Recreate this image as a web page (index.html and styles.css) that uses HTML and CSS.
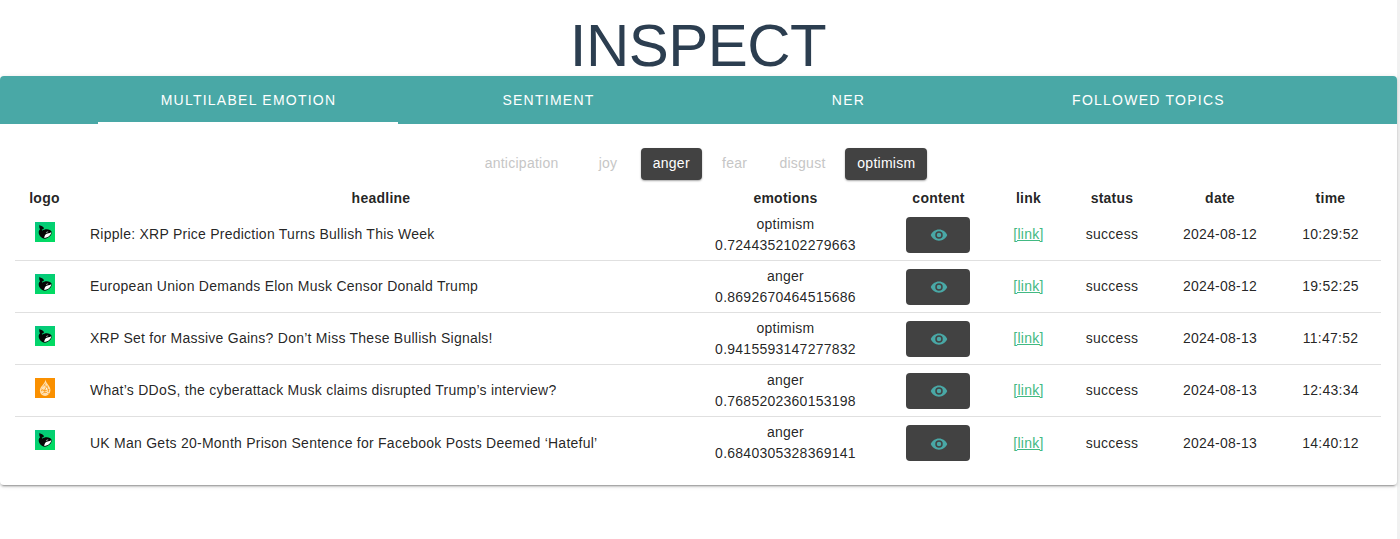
FILE: index.html
```html
<!DOCTYPE html>
<html lang="en">
<head>
<meta charset="utf-8">
<title>Inspect</title>
<link rel="stylesheet" href="styles.css">
</head>
<body>
<svg class="defs" aria-hidden="true">
  <defs>
    <linearGradient id="green" x1="0" y1="0" x2="0.6" y2="1"><stop offset="0" stop-color="#05c680"/><stop offset="1" stop-color="#02db62"/></linearGradient>
    <symbol id="whale" viewBox="0 0 20 20">
      <path fill="url(#green)" d="M0 0h20v20H0z"/>
      <path fill="#050505" d="M4.600 2.800C5.300 4 6.300 3.900 7.500 4.500c1 .5 1.500 1.300 1.300 2.300-.4.600-1.200.7-1.900.7l.2 1.200c2-1.700 5.600-2 7.700-.8 1.100.6 1.800 1.400 1.900 2.500-.1 3-3.300 5.700-6.900 6.300C6.300 16.300 3.700 13.400 3.700 10.200c0-1.300.6-2.100 1.400-2.900C4.200 6 4 4.500 4.600 2.800z"/>
      <path fill="#fff" d="M9.200 15.900c.1-2.300 1.200-4 3.300-4.500 1.500-.3 2.900-.7 3.800-1.200-.2 2.700-2.900 5.200-7.100 5.700z"/>
      <path fill="#9aa39e" d="M10.800 10.300l2.200-1 .4.700-2.200.9z"/>
    </symbol>
    <symbol id="flame" viewBox="0 0 20 20">
      <path fill="#fa9000" d="M0 0h20v20H0z"/>
      <path fill="#ffdfb0" d="M10.500 1.600c.4 1.800 1 3 2.200 4.700 1.500 2.100 3 4 2.700 6.500-.3 2.900-2.400 4.900-5.300 5.200-3-.2-5-2.200-5.200-5-.2-2.500 1-4 2.600-5.800 1.600-1.900 2.700-3.300 3-5.600z"/>
      <path fill="none" stroke="#fa9000" stroke-width=".8" d="M10.300 5.500c-1 3-4.300 4-3.700 7.700M10.400 7.500c2.500 2.500-2 4-1.300 6.500M12 7.600c-.5 2 2 3.500 1.300 6.500M6.400 11.500l3.500 1.300 4.500-1.300M7 15.200l3-1 3.600 1.300"/>
      <path fill="none" stroke="#fff" stroke-width=".8" d="M8.500 8.500l-2 3M11.300 9.800l1.100 3M8.400 13.500l-1 1.500M11.500 15.500l1.600-1"/>
    </symbol>
    <symbol id="eye" viewBox="0 0 24 24">
      <path d="M12,9A3,3 0 0,0 9,12A3,3 0 0,0 12,15A3,3 0 0,0 15,12A3,3 0 0,0 12,9M12,17A5,5 0 0,1 7,12A5,5 0 0,1 12,7A5,5 0 0,1 17,12A5,5 0 0,1 12,17M12,4.5C7,4.500 2.730,7.610 1,12C2.730,16.390 7,19.500 12,19.500C17,19.500 21.270,16.390 23,12C21.270,7.610 17,4.500 12,4.500Z"/>
    </symbol>
  </defs>
</svg>
<main class="page">
  <h1 class="title">INSPECT</h1>
  <section class="card">
    <nav class="tabs">
      <a class="tab active">Multilabel emotion</a>
      <a class="tab">Sentiment</a>
      <a class="tab">NER</a>
      <a class="tab">Followed topics</a>
    </nav>
    <div class="filters">
      <button class="filter wide">anticipation</button>
      <button class="filter">joy</button>
      <button class="filter on">anger</button>
      <button class="filter">fear</button>
      <button class="filter">disgust</button>
      <button class="filter on">optimism</button>
    </div>
    <table class="news">
      <colgroup><col class="c-logo"><col class="c-headline"><col class="c-emotions"><col class="c-content"><col class="c-link"><col class="c-status"><col class="c-date"><col class="c-time"></colgroup>
      <thead>
        <tr><th>logo</th><th>headline</th><th>emotions</th><th>content</th><th>link</th><th>status</th><th class="date">date</th><th>time</th></tr>
      </thead>
      <tbody>
        <tr><td><svg class="logo"><use href="#whale"/></svg></td><td class="headline">Ripple: XRP Price Prediction Turns Bullish This Week</td><td class="emotion">optimism<br>0.7244352102279663</td><td class="content"><button class="view"><svg class="eye"><use href="#eye"/></svg></button></td><td class="line"><a class="link" href="#">[link]</a></td><td class="line">success</td><td class="line date">2024-08-12</td><td class="line">10:29:52</td></tr>
        <tr><td><svg class="logo"><use href="#whale"/></svg></td><td class="headline">European Union Demands Elon Musk Censor Donald Trump</td><td class="emotion">anger<br>0.8692670464515686</td><td class="content"><button class="view"><svg class="eye"><use href="#eye"/></svg></button></td><td class="line"><a class="link" href="#">[link]</a></td><td class="line">success</td><td class="line date">2024-08-12</td><td class="line">19:52:25</td></tr>
        <tr><td><svg class="logo"><use href="#whale"/></svg></td><td class="headline">XRP Set for Massive Gains? Don’t Miss These Bullish Signals!</td><td class="emotion">optimism<br>0.9415593147277832</td><td class="content"><button class="view"><svg class="eye"><use href="#eye"/></svg></button></td><td class="line"><a class="link" href="#">[link]</a></td><td class="line">success</td><td class="line date">2024-08-13</td><td class="line">11:47:52</td></tr>
        <tr><td><svg class="logo"><use href="#flame"/></svg></td><td class="headline">What’s DDoS, the cyberattack Musk claims disrupted Trump’s interview?</td><td class="emotion">anger<br>0.7685202360153198</td><td class="content"><button class="view"><svg class="eye"><use href="#eye"/></svg></button></td><td class="line"><a class="link" href="#">[link]</a></td><td class="line">success</td><td class="line date">2024-08-13</td><td class="line">12:43:34</td></tr>
        <tr><td><svg class="logo"><use href="#whale"/></svg></td><td class="headline">UK Man Gets 20-Month Prison Sentence for Facebook Posts Deemed ‘Hateful’</td><td class="emotion">anger<br>0.6840305328369141</td><td class="content"><button class="view"><svg class="eye"><use href="#eye"/></svg></button></td><td class="line"><a class="link" href="#">[link]</a></td><td class="line">success</td><td class="line date">2024-08-13</td><td class="line">14:40:12</td></tr>
      </tbody>
    </table>
  </section>
</main>
</body>
</html>
```
FILE: styles.css
```css
* { box-sizing: border-box; }
html { background: #f1f1f1; overflow: hidden; }
body { margin: 0; font-family: "Liberation Sans", Arial, sans-serif; }
button { font: inherit; letter-spacing: inherit; border: 0; margin: 0; }
.defs { position: absolute; width: 0; height: 0; }
.page { width: 1397px; height: 539px; padding-top: 16px; background: #fff; }
.title {
  margin: 0;
  padding-right: 1px;
  color: #2c3e50;
  font-size: 60px;
  line-height: 60px;
  font-weight: 400;
  letter-spacing: -0.5px;
  text-align: center;
}
.card {
  height: 409px;
  overflow: hidden;
  border-radius: 4px;
  background: #fff;
  box-shadow: 0 3px 1px -2px rgba(0,0,0,.2), 0 2px 2px 0 rgba(0,0,0,.14), 0 1px 5px 0 rgba(0,0,0,.12);
  color: rgba(0,0,0,.87);
  font-size: 14px;
  letter-spacing: .25px;
}
.tabs { display: flex; justify-content: center; height: 48px; padding-right: 1px; background: #49a8a6; }
.tab {
  display: flex;
  align-items: center;
  justify-content: center;
  width: 300px;
  padding-left: 1px;
  border-bottom: 2px solid transparent;
  border-top: 2px solid transparent;
  color: #fff;
  letter-spacing: 1.25px;
  text-transform: uppercase;
}
.tab.active { border-bottom-color: #fff; }
.filters { display: flex; justify-content: center; gap: 7.8px; padding: 24px 0 7px; margin-left: 3px; }
.filter {
  height: 32px;
  min-width: 50px;
  padding: 0 12px 2px;
  border-radius: 4px;
  background: transparent;
  color: #c6c6c6;
}
.filter.wide { margin-right: 4.7px; }
.filter.on {
  background: #424242;
  color: #fff;
  box-shadow: 0 1px 2px rgba(0,0,0,.35);
}
.news { width: 1366px; margin: 0 15px; table-layout: fixed; border-collapse: separate; border-spacing: 0; text-align: center; }
.news th { height: 22px; padding: 0; line-height: 20px; }
.news td { height: 52px; padding: 0; vertical-align: middle; border-bottom: 1px solid #e0e0e0; }
.news .headline, .news .line { padding-bottom: 2px; }
.news .headline { padding-left: 16px; text-align: left; }
.news .content, .news .date { padding-right: 1px; }
.news tr:last-child td { padding-bottom: 0; border-bottom: 0; }
.news tr:last-child td:first-child { padding-bottom: 2px; }
.emotion { line-height: 21px; }
.c-logo { width: 59px; }
.c-headline { width: 614px; }
.c-emotions { width: 195px; }
.c-content { width: 111px; }
.c-link { width: 69px; }
.c-status { width: 98px; }
.c-date { width: 119px; }
.c-time { width: 101px; }
.logo { display: block; width: 20px; height: 20px; margin: 0 auto 5px; }
.view { display: flex; align-items: center; justify-content: center; width: 64px; height: 36px; margin: 0 auto; padding: 1px 0 0 1px; border-radius: 4px; background: #424242; }
.eye { width: 18px; height: 18px; fill: #49a8a6; }
.link { color: #42b983; }
```
